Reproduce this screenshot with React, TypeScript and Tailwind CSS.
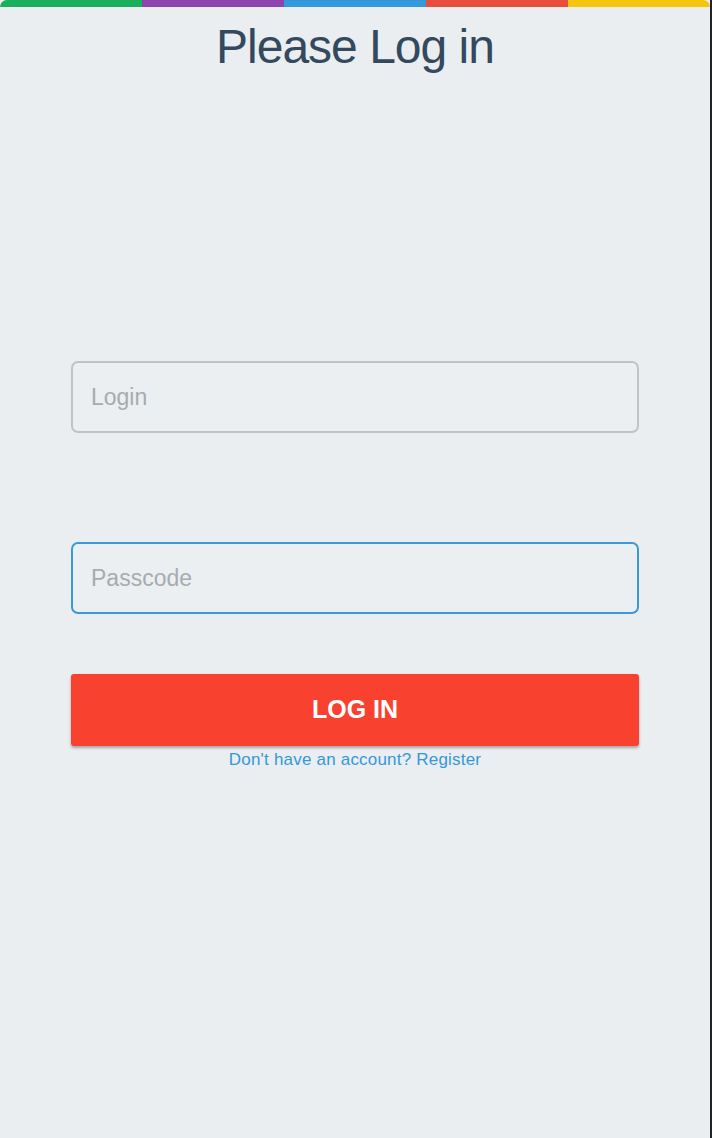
export default function App() {
  const colors = ["bg-[#1aaf5d]", "bg-[#8e44ad]", "bg-[#3498db]", "bg-[#e74c3c]", "bg-[#f4c40f]"];

  return (
    <div className="flex min-h-screen bg-[#202224] font-['Liberation_Sans',Arial,sans-serif]">
      <div className="flex min-h-screen w-[710px] flex-col bg-[#eaeef1]">
        {/* rainbow strip */}
        <div className="flex h-[7px] overflow-hidden rounded-t-[7px]">
          {colors.map((c) => (
            <div key={c} className={`flex-1 ${c}`} />
          ))}
        </div>

        <h1 className="mt-[16px] text-center text-[48px] leading-[48px] tracking-[-1px] text-[#34495e]">
          Please Log in
        </h1>

        <form className="mx-[71px] mt-[290px] flex flex-col" onSubmit={(e) => e.preventDefault()}>
          <input
            type="text"
            placeholder="Login"
            className="h-[72px] rounded-[7px] border-2 border-[#bfc3c6] bg-[#ebeff2] px-[18px] text-[23px] text-[#34495e] outline-none placeholder:text-[#a8abae]"
          />
          <input
            type="password"
            placeholder="Passcode"
            className="mt-[109px] h-[72px] rounded-[7px] border-2 border-[#3a9ad9] bg-[#ebeff2] px-[18px] text-[23px] text-[#34495e] outline-none placeholder:text-[#a8abae]"
          />
          <button
            type="submit"
            className="mt-[60px] h-[72px] rounded-[3px] bg-[#f8412e] text-[25px] font-bold text-white shadow-[0_2px_3px_rgba(0,0,0,0.3)]"
          >
            LOG IN
          </button>
          <a href="#" className="mt-[5px] text-center text-[17px] leading-[18px] tracking-[0.2px] text-[#3498db]">
            Don't have an account? Register
          </a>
        </form>
      </div>
    </div>
  );
}
